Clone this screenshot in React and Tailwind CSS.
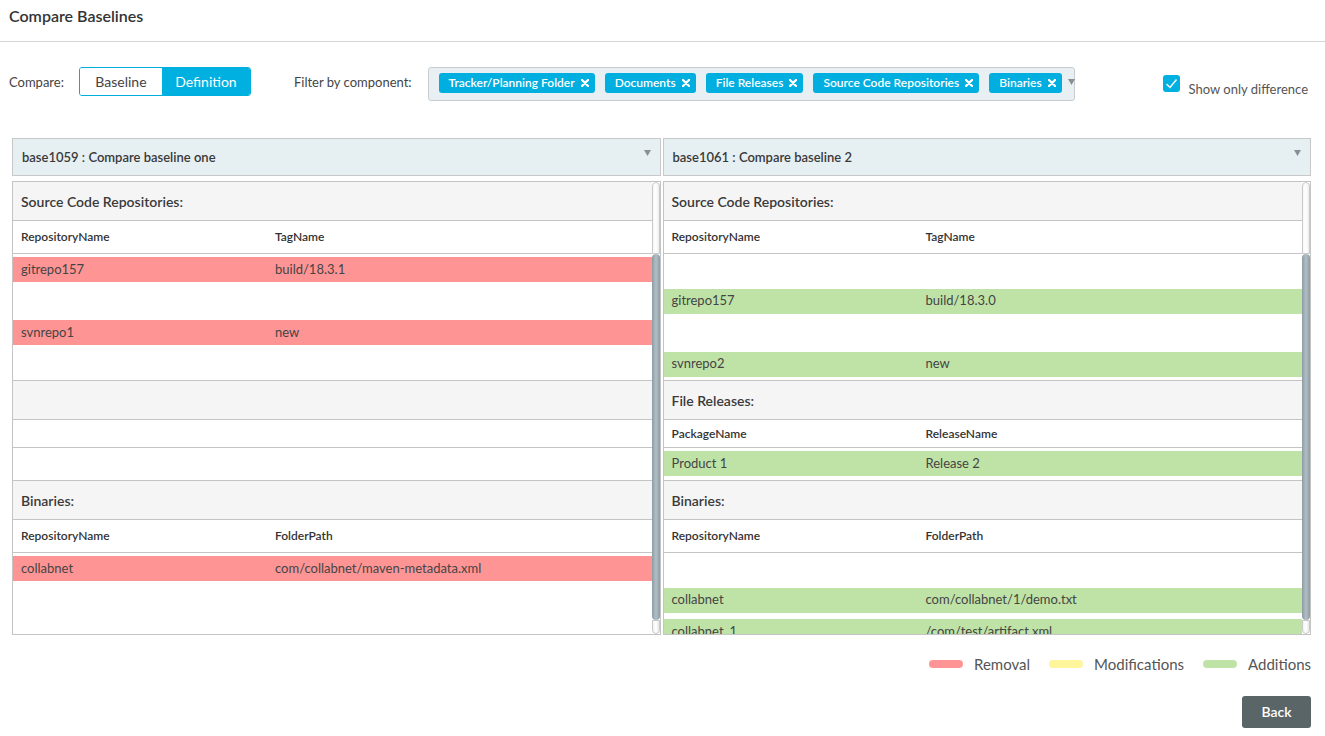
import React from 'react';

const font = { fontFamily: 'Lato, "Open Sans", Arial, sans-serif' };

const chips = ['Tracker/Planning Folder', 'Documents', 'File Releases', 'Source Code Repositories', 'Binaries'];

const XIcon = () => (
  <svg width="8" height="8" viewBox="0 0 8 8" className="ml-[6px] shrink-0">
    <path d="M1 1 L7 7 M7 1 L1 7" stroke="white" strokeWidth="2.4" strokeLinecap="round" />
  </svg>
);

const Caret = () => (
  <svg width="7" height="6" viewBox="0 0 7 6">
    <path d="M0 0 H7 L3.5 6 Z" fill="#8a8f93" />
  </svg>
);

const SectionHead = ({ title }) => (
  <div className="h-[39px] bg-[#f5f5f5] border-b border-[#c4c4c4] flex items-center px-2 text-[14px] font-semibold text-[#3a3a3a]">
    {title}
  </div>
);

const ColHead = ({ a, b, h = 'h-[33px]' }) => (
  <div className={`${h} border-b border-[#c4c4c4] grid grid-cols-[254px_1fr] items-center px-2 text-[12px] font-semibold text-[#333]`}>
    <span>{a}</span>
    <span>{b}</span>
  </div>
);

// kind: null = spacer row, 'del' = removal, 'add' = addition
const Row = ({ kind, a, b, last }) => (
  <div className={last ? 'h-[32.5px] pt-[3px] border-b border-[#c4c4c4]' : 'h-[31.5px] pt-[3px]'}>
    {kind && (
      <div
        className={`h-[25px] grid grid-cols-[254px_1fr] items-center px-2 text-[13px] text-[#444] ${
          kind === 'del' ? 'bg-[#fe9494]' : 'bg-[#bfe3a6]'
        }`}
      >
        <span>{a}</span>
        <span>{b}</span>
      </div>
    )}
  </div>
);

const Scrollbar = () => (
  <div className="w-[8px] flex flex-col shrink-0">
    <div className="h-[72px] border border-[#c9c9c9] rounded-t-[4px] bg-gradient-to-r from-[#f7f7f7] via-white to-[#ececec]" />
    <div className="h-[366px] rounded-[4px] bg-gradient-to-r from-[#8d9ba3] via-[#b2bfc6] to-[#8d9ba3]" />
    <div className="flex-1 border border-[#c9c9c9] rounded-b-[4px] bg-gradient-to-r from-[#f2f2f2] via-white to-[#e6e6e6]" />
  </div>
);

const Panel = ({ title, children }) => (
  <div className="flex-1 flex flex-col">
    <div className="h-[38px] bg-[#e6eff2] border border-[#c8c8c8] flex justify-between px-[9px] text-[13px] font-semibold text-[#3a3a3a]">
      <span className="self-center mt-[1px]">{title}</span>
      <span className="mt-[11px]"><Caret /></span>
    </div>
    <div className="mt-[5px] h-[454px] border border-[#c4c4c4] flex overflow-hidden">
      <div className="flex-1 overflow-hidden">{children}</div>
      <Scrollbar />
    </div>
  </div>
);

const Legend = ({ color, label }) => (
  <div className="flex items-center">
    <span className={`w-[34px] h-[8px] rounded-full ${color}`} />
    <span className="ml-[11px] text-[15px] text-[#555]">{label}</span>
  </div>
);

export default function App() {
  return (
    <div className="w-[1325px] h-[736px] bg-white overflow-hidden" style={font}>
      <div className="h-[42px] border-b border-[#d3d6d9] px-[9px] pt-[4px]">
        <h1 className="text-[16px] font-semibold text-[#333]">Compare Baselines</h1>
      </div>

      <div className="flex items-start pl-[9px] pr-[17px] mt-[25px]">
        <span className="text-[13px] text-[#444] mt-[6px]">Compare:</span>
        <div className="ml-[15px] flex h-[29px] border border-[#00aedb] rounded-[3px] overflow-hidden text-[14px]">
          <span className="w-[82px] flex items-center justify-center text-[#444] bg-white">Baseline</span>
          <span className="w-[88px] flex items-center justify-center text-white bg-[#00b0e0]">Definition</span>
        </div>
        <span className="ml-[43px] text-[13px] text-[#444] mt-[6px]">Filter by component:</span>
        <div className="ml-[16px] w-[647px] h-[34px] bg-[#e8f0f3] border border-[#c8ccd0] rounded-[3px] flex items-start pl-[10px] pt-[5px]">
          <div className="flex gap-[10px]">
            {chips.map((c) => (
              <span
                key={c}
                className="h-[20px] shrink-0 whitespace-nowrap bg-[#00aee0] rounded-[3px] flex items-center pl-[10px] pr-[6px] text-[12px] font-semibold text-white"
              >
                {c}
                <XIcon />
              </span>
            ))}
          </div>
          <span className="ml-[6px] mt-[6px]"><Caret /></span>
        </div>
        <div className="ml-auto flex items-start">
          <span className="mt-[8px] w-[17px] h-[17px] rounded-[3px] bg-[#00b0e0] flex items-center justify-center">
            <svg width="13" height="11" viewBox="0 0 13 11">
              <path d="M1.5 6 L5 9.5 L11.5 1.5" stroke="white" strokeWidth="1.4" fill="none" />
            </svg>
          </span>
          <span className="ml-[9px] mt-[13px] text-[13px] text-[#555]">Show only difference</span>
        </div>
      </div>

      <div className="flex gap-[2px] pl-[12px] pr-[14px] mt-[37px]">
        <Panel title="base1059 : Compare baseline one">
          <SectionHead title="Source Code Repositories:" />
          <ColHead a="RepositoryName" b="TagName" />
          <Row kind="del" a="gitrepo157" b="build/18.3.1" />
          <Row />
          <Row kind="del" a="svnrepo1" b="new" />
          <Row last />
          <SectionHead title="" />
          <ColHead a="" b="" h="h-[28px]" />
          <div className="h-[33px] border-b border-[#c4c4c4]" />
          <SectionHead title="Binaries:" />
          <ColHead a="RepositoryName" b="FolderPath" />
          <Row kind="del" a="collabnet" b="com/collabnet/maven-metadata.xml" />
          <Row />
          <Row />
        </Panel>
        <Panel title="base1061 : Compare baseline 2">
          <SectionHead title="Source Code Repositories:" />
          <ColHead a="RepositoryName" b="TagName" />
          <Row />
          <Row kind="add" a="gitrepo157" b="build/18.3.0" />
          <Row />
          <Row kind="add" a="svnrepo2" b="new" last />
          <SectionHead title="File Releases:" />
          <ColHead a="PackageName" b="ReleaseName" h="h-[28px]" />
          <div className="h-[33px] pt-[3px] border-b border-[#c4c4c4]">
            <div className="h-[25px] grid grid-cols-[254px_1fr] items-center px-2 text-[13px] text-[#444] bg-[#bfe3a6]">
              <span>Product 1</span>
              <span>Release 2</span>
            </div>
          </div>
          <SectionHead title="Binaries:" />
          <ColHead a="RepositoryName" b="FolderPath" />
          <Row />
          <Row kind="add" a="collabnet" b="com/collabnet/1/demo.txt" />
          <Row kind="add" a="collabnet_1" b="/com/test/artifact.xml" />
        </Panel>
      </div>

      <div className="flex justify-end gap-[19px] pr-[14px] mt-[18px]">
        <Legend color="bg-[#fe9494]" label="Removal" />
        <Legend color="bg-[#fff59a]" label="Modifications" />
        <Legend color="bg-[#bfe3a6]" label="Additions" />
      </div>

      <div className="flex justify-end pr-[14px] mt-[20px]">
        <button className="w-[69px] h-[32px] rounded-[3px] bg-[#5a6567] text-white text-[14px] font-semibold">
          Back
        </button>
      </div>
    </div>
  );
}
